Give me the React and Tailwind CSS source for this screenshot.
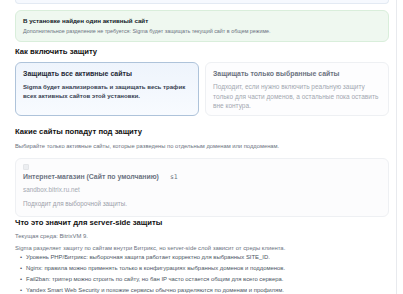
const bullets = [
  'Уровень PHP/Битрикс: выборочная защита работает корректно для выбранных SITE_ID.',
  'Nginx: правила можно применять только в конфигурациях выбранных доменов и поддоменов.',
  'Fail2ban: триггер можно строить по сайту, но бан IP часто остается общим для всего сервера.',
  'Yandex Smart Web Security и похожие сервисы обычно разделяются по доменам и профилям.',
];

export default function App() {
  return (
    <div className="w-[403px] h-[294px] overflow-hidden bg-white font-['Liberation_Sans',Arial,sans-serif] text-[#111827]">
      <div className="w-[397px] h-full border-r border-[#e8eaee] bg-white pl-[15px] pr-[7px]">
        {/* top card, mostly scrolled out */}
        <div className="h-[4px] rounded-b-[6px] border-x border-b border-[#e3eaf3] bg-[#f6f9fe]" />

        {/* one site found */}
        <div className="mt-[6px] h-[32px] rounded-[6px] border border-[#d9eedb] bg-[#eff8f0] px-[7px] pt-[6px]">
          <div className="text-[6.2px] leading-[8px] font-bold text-[#111827]">В установке найден один активный сайт</div>
          <div className="mt-[3px] text-[5.4px] leading-[7px] text-[#6b7280]">
            Дополнительное разделение не требуется: Sigma будет защищать текущий сайт в общем режиме.
          </div>
        </div>

        <h3 className="mt-[5px] text-[7.7px] leading-[10px] font-bold text-[#111]">Как включить защиту</h3>

        <div className="mt-[5px] grid grid-cols-2 gap-[6px]">
          <div className="h-[54px] rounded-[6px] border border-[#aec3da] bg-gradient-to-b from-[#eef4fc] to-[#f8fbff] px-[7px] pt-[7px]">
            <div className="text-[7px] leading-[8px] font-bold text-[#1f2937]">Защищать все активные сайты</div>
            <div className="mt-[4px] text-[6.1px] leading-[9px] font-bold text-[#374151]">
              Sigma будет анализировать и защищать весь трафик всех активных сайтов этой установки.
            </div>
          </div>
          <div className="h-[54px] rounded-[6px] border border-[#eef0f3] bg-[#fdfdfe] pl-[7px] pr-[2px] pt-[7px]">
            <div className="text-[6.9px] leading-[8px] font-bold text-[#6b7280]">Защищать только выбранные сайты</div>
            <div className="mt-[4px] whitespace-nowrap text-[6.5px] leading-[9.5px] text-[#a3a8b1]">
              Подходит, если нужно включить реальную защиту
              <br />
              только для части доменов, а остальные пока оставить
              <br />
              вне контура.
            </div>
          </div>
        </div>

        <h3 className="mt-[11px] text-[7.7px] leading-[10px] font-bold text-[#111]">Какие сайты попадут под защиту</h3>
        <p className="mt-[6px] text-[5.8px] leading-[7px] text-[#6b7280]">
          Выбирайте только активные сайты, которые разведены по отдельным доменам или поддоменам.
        </p>

        <div className="mt-[8px] h-[59px] rounded-[6px] border border-[#eef0f3] bg-[#fcfcfd] px-[7px] pt-[5px]">
          <div className="h-[6px] w-[6px] rounded-[1px] border border-[#e3e5e8] bg-[#eceef1]" />
          <div className="mt-[2px] flex items-baseline gap-[11px] text-[6.9px] leading-[10px] font-bold text-[#6b7280]">
            <span>Интернет-магазин (Сайт по умолчанию)</span>
            <span className="font-['DejaVu_Sans_Mono',monospace] font-normal text-[6.5px]">s1</span>
          </div>
          <div className="mt-[4px] text-[6.3px] leading-[8px] text-[#a3a8b1]">sandbox.bitrix.ru.net</div>
          <div className="mt-[6px] text-[6.3px] leading-[8px] text-[#9ca1aa]">Подходит для выборочной защиты.</div>
        </div>

        <h3 className="mt-[1px] text-[7.7px] leading-[10px] font-bold text-[#111]">Что это значит для server-side защиты</h3>
        <p className="mt-[5px] text-[5.9px] leading-[7px] text-[#6b7280]">Текущая среда: BitrixVM 9.</p>
        <p className="mt-[5px] text-[5.9px] leading-[7px] text-[#6b7280]">
          Sigma разделяет защиту по сайтам внутри Битрикс, но server-side слой зависит от среды клиента.
        </p>
        <ul className="mt-[1px] pl-[5px] text-[5.9px] leading-[8px] text-[#4b5563]">
          {bullets.map((b) => (
            <li key={b} className="mb-[3px] flex gap-[4px]">
              <span>•</span>
              <span>{b}</span>
            </li>
          ))}
        </ul>
      </div>
    </div>
  );
}
